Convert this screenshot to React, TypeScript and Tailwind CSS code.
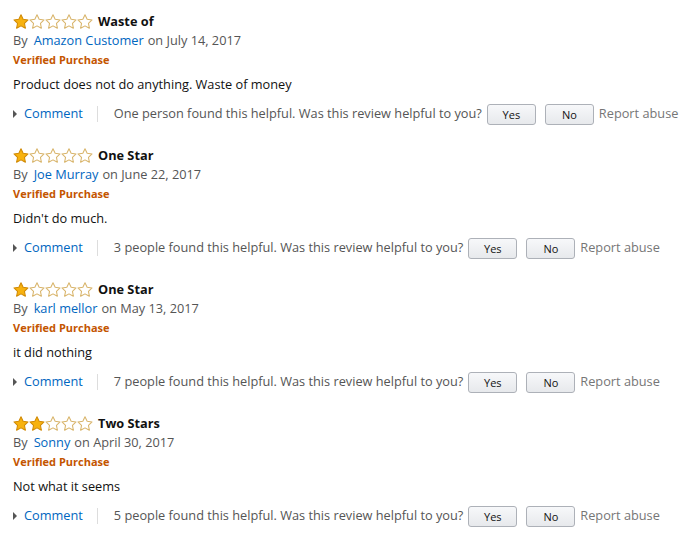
const reviews = [
  { stars: 1, title: "Waste of", author: "Amazon Customer", date: "July 14, 2017", body: "Product does not do anything. Waste of money", helpful: "One person found this helpful." },
  { stars: 1, title: "One Star", author: "Joe Murray", date: "June 22, 2017", body: "Didn't do much.", helpful: "3 people found this helpful." },
  { stars: 1, title: "One Star", author: "karl mellor", date: "May 13, 2017", body: "it did nothing", helpful: "7 people found this helpful." },
  { stars: 2, title: "Two Stars", author: "Sonny", date: "April 30, 2017", body: "Not what it seems", helpful: "5 people found this helpful." },
];

function Star({ filled }: { filled: boolean }) {
  return (
    <svg width="16" height="15" viewBox="0 0 24 23" className="block">
      <path
        d="M12 1.2l3.3 6.9 7.5 1-5.5 5.2 1.4 7.5L12 18.2l-6.7 3.6 1.4-7.5L1.2 9.1l7.5-1z"
        fill={filled ? "#f7b20f" : "#fff"}
        stroke={filled ? "#d08a06" : "#d8b46a"}
        strokeWidth="1.6"
        strokeLinejoin="round"
      />
    </svg>
  );
}

function Review({ r }: { r: (typeof reviews)[number] }) {
  return (
    <div className="h-[134px] whitespace-nowrap">
      <div className="flex items-center h-[19px]">
        <div className="flex">
          {[0, 1, 2, 3, 4].map((i) => (
            <Star key={i} filled={i < r.stars} />
          ))}
        </div>
        <span className="ml-[5px] font-bold text-[12.75px] text-[#111]">{r.title}</span>
      </div>
      <div className="h-[20px] flex items-center text-[12.75px] text-[#555]">
        By<span className="ml-[6px] text-[#0066c0]">{r.author}</span>
        <span className="ml-[4px]">on {r.date}</span>
      </div>
      <div className="h-[19px] flex items-center text-[11px] font-bold text-[#c45500]">Verified Purchase</div>
      <div className="h-[24px] flex items-end text-[12.75px] text-[#111]">{r.body}</div>
      <div className="h-[32px] flex items-end pb-[1px]">
        <div className="flex items-center h-[22px] text-[12.75px]">
          <span className="w-0 h-0 border-y-[4px] border-y-transparent border-l-[4px] border-l-[#555] mr-[7px]" />
          <span className="text-[#0066c0]">Comment</span>
          <span className="w-px h-[16px] bg-[#ddd] ml-[14px] mr-[16px]" />
          <span className="text-[#555]">{r.helpful} Was this review helpful to you?</span>
          <button className="ml-[5px] w-[49px] h-[21px] rounded-[3px] border border-[#adb1b8] bg-gradient-to-b from-[#f7f8fa] to-[#e7e9ec] text-[11px] text-[#111] leading-none">
            Yes
          </button>
          <button className="ml-[9px] w-[49px] h-[21px] rounded-[3px] border border-[#adb1b8] bg-gradient-to-b from-[#f7f8fa] to-[#e7e9ec] text-[11px] text-[#111] leading-none">
            No
          </button>
          <span className="ml-[5px] text-[#767676]">Report abuse</span>
        </div>
      </div>
    </div>
  );
}

export default function App() {
  return (
    <div className="w-[691px] h-[542px] bg-white pl-[13px] pt-[12px] font-['Open_Sans',sans-serif] overflow-hidden">
      {reviews.map((r, i) => (
        <Review key={i} r={r} />
      ))}
    </div>
  );
}
